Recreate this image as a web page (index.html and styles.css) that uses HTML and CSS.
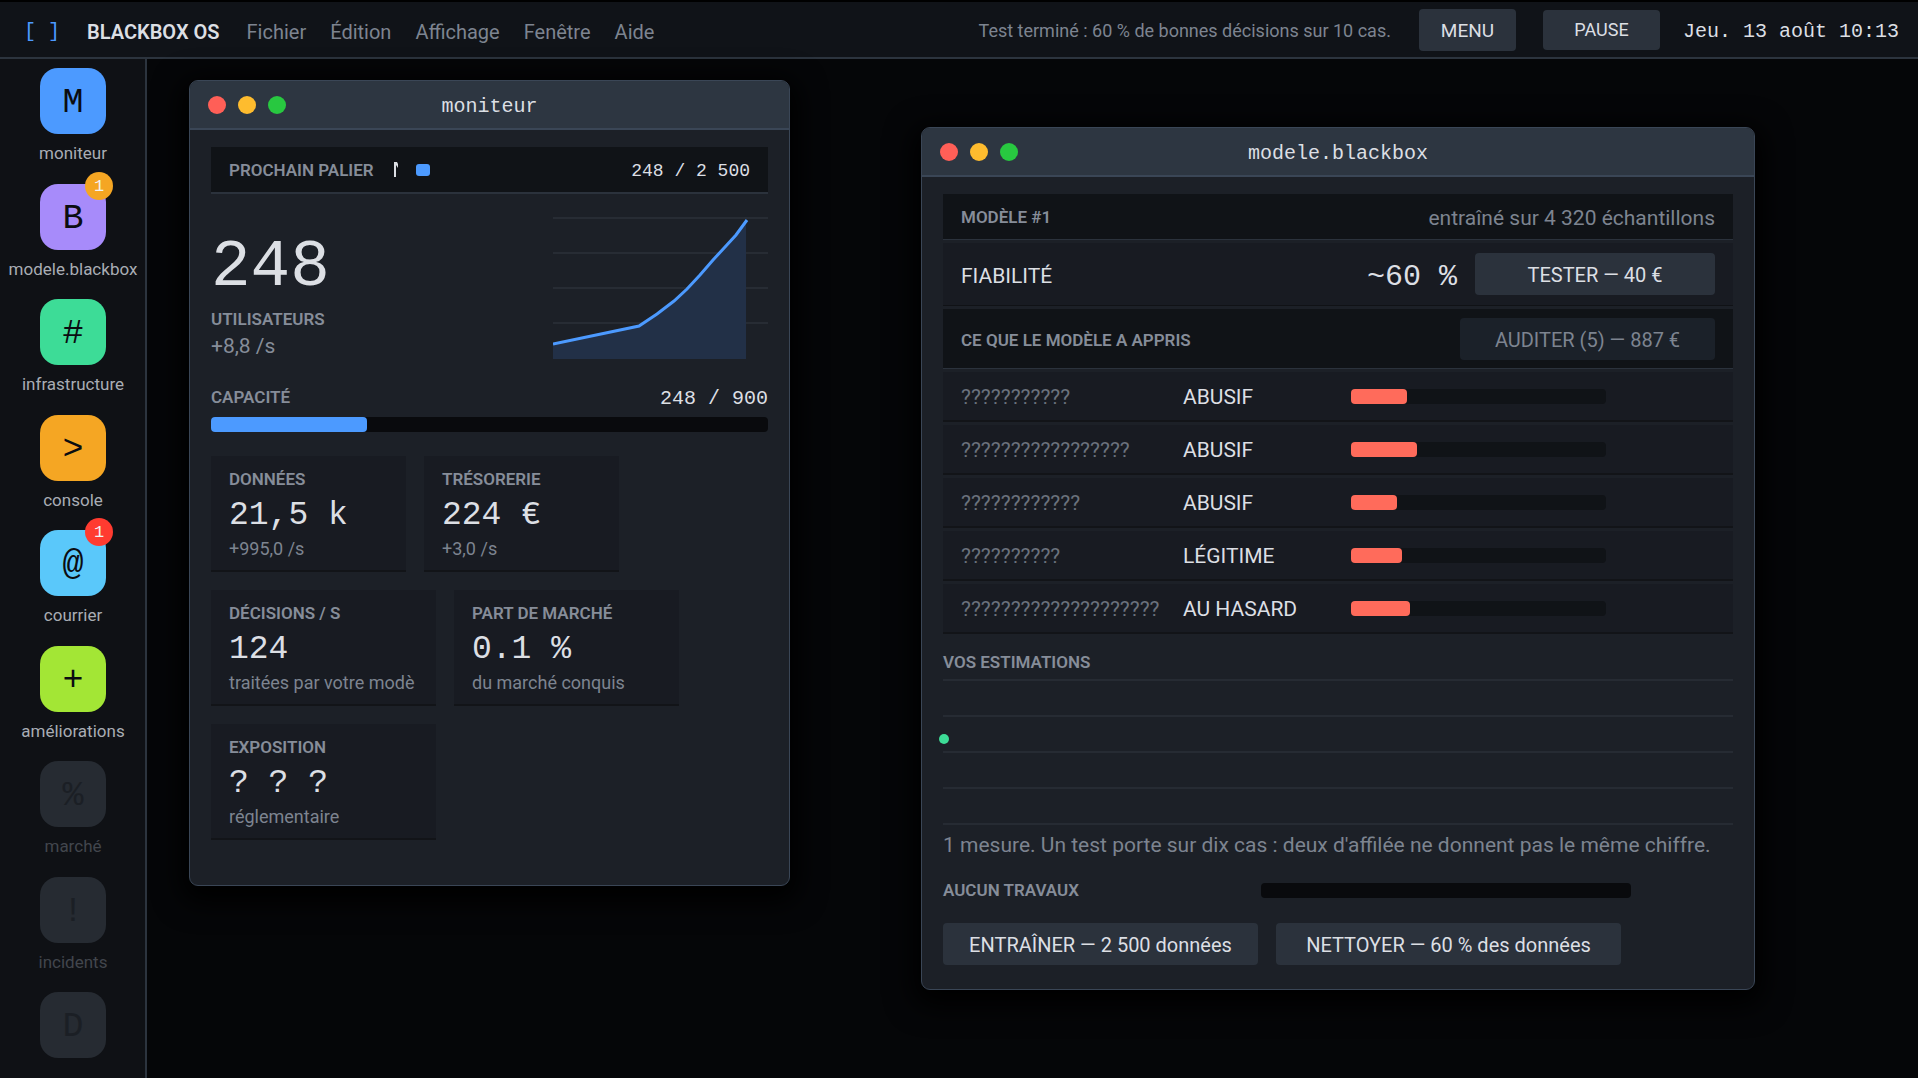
FILE: index.html
```html
<!DOCTYPE html>
<html lang="fr">
<head>
    <meta charset="UTF-8">
    <meta name="viewport" content="width=device-width, initial-scale=1.0">
    <title>BLACKBOX OS</title>
    <link rel="stylesheet" href="styles.css">
</head>
<body>
    <header class="topbar">
        <span class="logo">[ ]</span>
        <strong class="brand">BLACKBOX OS</strong>
        <nav class="menus">
            <a href="#">Fichier</a>
            <a href="#">Édition</a>
            <a href="#">Affichage</a>
            <a href="#">Fenêtre</a>
            <a href="#">Aide</a>
        </nav>
        <span class="status">Test terminé : 60 % de bonnes décisions sur 10 cas.</span>
        <button class="btn btn-menu">MENU</button>
        <button class="btn btn-pause">PAUSE</button>
        <time class="clock">Jeu. 13 août 10:13</time>
    </header>

    <div class="workspace">
        <nav class="dock">
            <a class="app" href="#"><span class="tile blue">M</span><span class="app-name">moniteur</span></a>
            <a class="app" href="#"><span class="tile purple">B<span class="badge">1</span></span><span class="app-name">modele.blackbox</span></a>
            <a class="app" href="#"><span class="tile green">#</span><span class="app-name">infrastructure</span></a>
            <a class="app" href="#"><span class="tile orange">&gt;</span><span class="app-name">console</span></a>
            <a class="app" href="#"><span class="tile sky">@<span class="badge alert">1</span></span><span class="app-name">courrier</span></a>
            <a class="app" href="#"><span class="tile lime">+</span><span class="app-name">améliorations</span></a>
            <a class="app locked" href="#"><span class="tile">%</span><span class="app-name">marché</span></a>
            <a class="app locked" href="#"><span class="tile">!</span><span class="app-name">incidents</span></a>
            <a class="app locked" href="#"><span class="tile">D</span></a>
        </nav>

        <main class="desktop">
            <section class="window monitor">
                <div class="titlebar">
                    <div class="lights"><button class="light close" aria-label="Fermer"></button><button class="light reduce" aria-label="Réduire"></button><button class="light expand" aria-label="Agrandir"></button></div>
                    <h2 class="title">moniteur</h2>
                </div>
                <div class="content">
                    <div class="milestone">
                        <span class="label">PROCHAIN PALIER</span>
                        <svg class="marker" viewBox="0 0 4 15" width="4" height="15"><path d="M0 0H3L4 2V6L2 3V15H0Z"/></svg>
                        <span class="step"></span>
                        <span class="milestone-value">248 / 2 500</span>
                    </div>

                    <div class="hero">
                        <div>
                            <div class="hero-value">248</div>
                            <div class="label">UTILISATEURS</div>
                            <div class="hero-rate">+8,8 /s</div>
                        </div>
                        <svg class="chart" viewBox="0 0 215 142" width="215" height="142">
                            <path class="grid-lines" d="M0 1H215M0 36H215M0 71H215M0 106H215"/>
                            <path class="area" d="M0 127L86 109L104 97L121 84L134 72L147 58L160 43L172 29L183 16L193 3V142H0Z"/>
                            <path class="curve" d="M0 127L86 109L104 97L121 84L134 72L147 58L160 43L172 30L183 18L194 3"/>
                        </svg>
                    </div>

                    <div class="capacity">
                        <span class="label">CAPACITÉ</span>
                        <span class="capacity-value">248 / 900</span>
                    </div>
                    <div class="bar"><div class="fill" style="width: 28%"></div></div>

                    <div class="cards">
                        <div class="card-row">
                            <div class="card"><div class="label">DONNÉES</div><div class="value">21,5 k</div><div class="sub">+995,0 /s</div></div>
                            <div class="card"><div class="label">TRÉSORERIE</div><div class="value">224 €</div><div class="sub">+3,0 /s</div></div>
                        </div>
                        <div class="card-row">
                            <div class="card wide"><div class="label">DÉCISIONS / S</div><div class="value">124</div><div class="sub">traitées par votre modè</div></div>
                            <div class="card wide"><div class="label">PART DE MARCHÉ</div><div class="value">0.1 %</div><div class="sub">du marché conquis</div></div>
                        </div>
                        <div class="card-row">
                            <div class="card wide"><div class="label">EXPOSITION</div><div class="value">? ? ?</div><div class="sub">réglementaire</div></div>
                        </div>
                    </div>
                </div>
            </section>

            <section class="window model">
                <div class="titlebar">
                    <div class="lights"><button class="light close" aria-label="Fermer"></button><button class="light reduce" aria-label="Réduire"></button><button class="light expand" aria-label="Agrandir"></button></div>
                    <h2 class="title">modele.blackbox</h2>
                </div>
                <div class="content">
                    <div class="rows">
                        <div class="row head">
                            <span class="label">MODÈLE #1</span>
                            <span class="trained">entraîné sur 4 320 échantillons</span>
                        </div>
                        <div class="row reliability">
                            <span class="row-name">FIABILITÉ</span>
                            <span class="score">~60 %</span>
                            <button class="btn btn-test">TESTER — 40 €</button>
                        </div>
                        <div class="row head learned">
                            <span class="label">CE QUE LE MODÈLE A APPRIS</span>
                            <button class="btn btn-audit" disabled>AUDITER (5) — 887 €</button>
                        </div>
                    </div>
                    <table class="rules">
                        <tr><td class="rule">???????????</td><td class="verdict">ABUSIF</td><td><div class="weight"><div class="fill" style="width: 22%"></div></div></td></tr>
                        <tr><td class="rule">?????????????????</td><td class="verdict">ABUSIF</td><td><div class="weight"><div class="fill" style="width: 26%"></div></div></td></tr>
                        <tr><td class="rule">????????????</td><td class="verdict">ABUSIF</td><td><div class="weight"><div class="fill" style="width: 18%"></div></div></td></tr>
                        <tr><td class="rule">??????????</td><td class="verdict">LÉGITIME</td><td><div class="weight"><div class="fill" style="width: 20%"></div></div></td></tr>
                        <tr><td class="rule">????????????????????</td><td class="verdict">AU HASARD</td><td><div class="weight"><div class="fill" style="width: 23%"></div></div></td></tr>
                    </table>

                    <div class="label estimates-label">VOS ESTIMATIONS</div>
                    <div class="estimates">
                        <span class="point"></span>
                    </div>
                    <p class="note">1 mesure. Un test porte sur dix cas : deux d'affilée ne donnent pas le même chiffre.</p>

                    <div class="job">
                        <span class="label">AUCUN TRAVAUX</span>
                        <div class="bar"></div>
                    </div>
                    <div class="actions">
                        <button class="btn btn-train">ENTRAÎNER — 2 500 données</button>
                        <button class="btn btn-clean">NETTOYER — 60 % des données</button>
                    </div>
                </div>
            </section>
        </main>
    </div>
</body>
</html>
```
FILE: styles.css
```css
* {
    box-sizing: border-box;
}

body {
    margin: 0;
    height: 100vh;
    display: flex;
    flex-direction: column;
    overflow: hidden;
    background: #050608;
    color: #dcdfe4;
    font-family: Roboto, "Liberation Sans", sans-serif;
    font-size: 21px;
    line-height: 24px;
}

a {
    color: inherit;
    text-decoration: none;
}

button {
    border: 0;
    padding: 0;
    font: inherit;
    color: inherit;
}

.topbar {
    display: flex;
    align-items: center;
    height: 59px;
    flex: none;
    padding: 0 19px 0 24px;
    background: #101318;
    border-top: 2px solid #000;
    border-bottom: 2px solid #2c343e;
    font-size: 20px;
}

.logo,
.brand,
.menus,
.clock {
    padding-top: 4px;
}

.logo {
    width: 63px;
    color: #4c9aff;
    font-family: "Liberation Mono", monospace;
}

.brand {
    font-weight: 600;
}

.menus {
    display: flex;
    gap: 24px;
    margin-left: 27px;
    color: #7d8490;
}

.status {
    margin-left: auto;
    padding-top: 2px;
    color: #7d8490;
    font-size: 18px;
}

.btn {
    height: 42px;
    padding-top: 2px;
    background: #2b323c;
    border-radius: 4px;
    font-size: 20px;
}

.btn:disabled {
    background: #1b2129;
    color: #7d8490;
}

.btn-menu {
    width: 97px;
    margin-left: 28px;
    font-size: 19px;
}

.btn-pause {
    width: 117px;
    height: 40px;
    margin: 0 23px 0 27px;
    padding-top: 0;
    font-size: 18px;
}

.clock,
.title,
.hero-value,
.capacity-value,
.milestone-value,
.value,
.score,
.tile {
    font-family: "Liberation Mono", monospace;
}

.workspace {
    display: flex;
    flex: 1;
    min-height: 0;
}

.dock {
    display: flex;
    flex-direction: column;
    justify-content: space-between;
    width: 147px;
    padding: 9px 0 20px 1px;
    background: #0f1115;
    border-right: 2px solid #2c343e;
}

.app {
    display: flex;
    flex-direction: column;
    align-items: center;
    color: #a9adb4;
    font-size: 17px;
}

.app-name {
    margin-top: 7px;
}

.tile {
    position: relative;
    display: flex;
    align-items: center;
    justify-content: center;
    width: 66px;
    height: 66px;
    padding-top: 4px;
    border-radius: 18px;
    color: #0b0d11;
    font-size: 35px;
}

.blue { background: #4c9aff; }
.purple { background: #a78bfa; }
.green { background: #3ddc97; }
.orange { background: #f5a623; }
.sky { background: #5ac8fa; }
.lime { background: #a3e635; }

.locked {
    color: #42464d;
}

.locked .tile {
    background: #262b32;
    color: #1b1f25;
}

.badge {
    position: absolute;
    top: -12px;
    right: -7px;
    width: 28px;
    height: 28px;
    border-radius: 50%;
    background: #f5a623;
    color: #f2f3f5;
    font-size: 17px;
    line-height: 30px;
    text-align: center;
}

.badge.alert {
    background: #ff3b30;
}

.desktop {
    position: relative;
    flex: 1;
}

.window {
    position: absolute;
    background: #1c2027;
    border: 1px solid #3a4656;
    border-radius: 9px;
    box-shadow: 0 8px 28px 8px #000;
}

.monitor {
    left: 42px;
    top: 21px;
    width: 601px;
}

.model {
    left: 774px;
    top: 68px;
    width: 834px;
}

.titlebar {
    display: grid;
    grid-template-columns: 1fr auto 1fr;
    align-items: center;
    height: 49px;
    padding: 0 18px;
    background: #2d3641;
    border-bottom: 2px solid #3a4656;
    border-radius: 8px 8px 0 0;
}

.lights {
    display: flex;
    gap: 12px;
}

.light {
    width: 18px;
    height: 18px;
    border-radius: 50%;
}

.close { background: #ff5f57; }
.reduce { background: #febc2e; }
.expand { background: #28c840; }

.title {
    margin: 0;
    padding-top: 5px;
    font-size: 20px;
    font-weight: normal;
}

.content {
    padding: 17px 21px 24px;
}

.monitor .content {
    padding-bottom: 45px;
}

.label {
    color: #868d99;
    font-size: 17px;
    font-weight: 600;
    line-height: 20px;
}

.milestone {
    display: flex;
    align-items: center;
    height: 47px;
    padding: 0 18px;
    background: #101317;
    border-bottom: 2px solid #2b323c;
}

.marker {
    margin-left: 20px;
    fill: #dcdfe4;
}

.step {
    width: 14px;
    height: 12px;
    margin-left: 18px;
    background: #4c9aff;
    border-radius: 3px;
}

.milestone-value {
    margin-left: auto;
    padding-top: 3px;
    font-size: 18px;
}

.hero {
    display: flex;
    justify-content: space-between;
    margin-top: 23px;
}

.hero-value {
    margin-top: 15px;
    font-size: 66px;
    line-height: 72px;
}

.hero .label {
    margin-top: 5px;
}

.hero-rate {
    margin-top: 5px;
    color: #868d99;
}

.chart {
    display: block;
}

.grid-lines {
    stroke: #272c34;
    stroke-width: 2;
}

.area {
    fill: #223047;
}

.curve {
    fill: none;
    stroke: #4c9aff;
    stroke-width: 3;
}

.capacity {
    display: flex;
    justify-content: space-between;
    align-items: center;
    height: 24px;
    margin-top: 26px;
}

.capacity-value {
    padding-top: 3px;
    font-size: 20px;
}

.bar {
    height: 15px;
    background: #090a0d;
    border-radius: 4px;
}

.monitor .bar {
    margin-top: 8px;
}

.fill {
    height: 100%;
    background: #4c9aff;
    border-radius: 4px;
}

.cards {
    display: grid;
    gap: 18px;
    margin-top: 24px;
}

.card-row {
    display: flex;
    gap: 18px;
}

.card {
    width: 195px;
    height: 116px;
    padding: 13px 18px 0;
    background: #181b22;
    border-bottom: 2px solid #121418;
}

.card.wide {
    width: 225px;
}

.value {
    margin-top: 7px;
    font-size: 33px;
    line-height: 40px;
}

.sub {
    margin-top: 1px;
    color: #7d8490;
    font-size: 18px;
    white-space: nowrap;
}

.rows {
    display: grid;
    gap: 3px;
}

.row {
    display: flex;
    align-items: center;
    justify-content: space-between;
    height: 46px;
    padding: 0 18px;
    background: #181b22;
    border-bottom: 1px solid #101216;
}

.head {
    background: #101317;
    border-bottom-color: #2b323c;
}

.row-name,
.trained {
    padding-top: 3px;
}

.trained {
    color: #7d8490;
}

.reliability {
    height: 63px;
}

.learned {
    height: 60px;
}

.learned .label {
    padding-top: 2px;
}

.score {
    margin-left: auto;
    padding-top: 5px;
    font-size: 30px;
}

.btn-test {
    width: 240px;
    margin-left: 18px;
}

.btn-audit {
    width: 255px;
}

.rules {
    width: 100%;
    border-collapse: separate;
    border-spacing: 0 3px;
}

.rules td {
    height: 50px;
    padding: 0;
    background: #181b22;
    border-bottom: 2px solid #121418;
}

.rules .rule {
    width: 240px;
    padding: 2px 0 0 18px;
    color: #6b727d;
}

.rules .verdict {
    width: 168px;
    padding-top: 2px;
}

.weight {
    width: 255px;
    height: 15px;
    background: #101317;
    border-radius: 4px;
}

.weight .fill {
    background: #ff6b5b;
}

.estimates-label {
    margin-top: 15px;
}

.estimates {
    position: relative;
    height: 146px;
    margin-top: 7px;
    background: repeating-linear-gradient(#262b33 0 2px, transparent 2px 36px);
}

.point {
    position: absolute;
    left: -4px;
    top: 41%;
    width: 10px;
    height: 10px;
    margin: -5px 0 0;
    border-radius: 50%;
    background: #3ddc97;
}

.note {
    margin: 8px 0 0;
    color: #7d8490;
    white-space: nowrap;
}

.job {
    display: grid;
    grid-template-columns: 318px 370px;
    align-items: center;
    margin-top: 23px;
}

.actions {
    display: flex;
    gap: 18px;
    margin-top: 23px;
}

.btn-train {
    width: 315px;
}

.btn-clean {
    width: 345px;
}
```
